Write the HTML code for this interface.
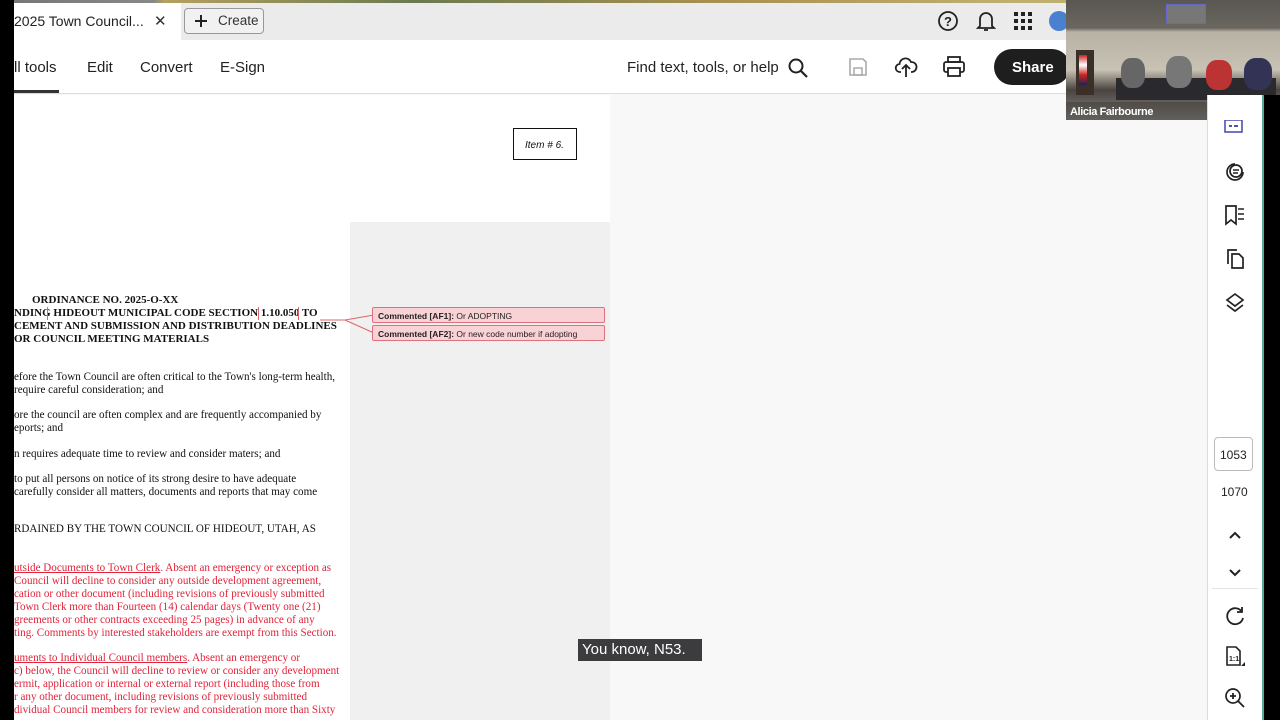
<!DOCTYPE html>
<html><head><meta charset="utf-8"><style>
*{margin:0;padding:0;box-sizing:border-box}
body{width:1280px;height:720px;overflow:hidden;position:relative;background:#f8f8f8;font-family:"Liberation Sans",sans-serif}
.abs{position:absolute}
.ser{font-family:"Liberation Serif",serif}
.doc div{position:absolute;white-space:nowrap;font-size:11.1px;color:#111}
.doc div.b{font-size:11px}
.red{color:#e0243a!important}
svg{position:absolute}
</style></head><body>
<div class="abs" style="left:0;top:0;width:14px;height:720px;background:#000"></div>
<div class="abs" style="left:14px;top:0;width:1052px;height:3px;background:linear-gradient(90deg,#777 0,#888 140px,#b5a060 150px,#6a7a50 400px,#a89050 700px,#c0b070 1000px)"></div>
<div class="abs" style="left:14px;top:3px;width:1052px;height:37px;background:#ebebeb"></div>
<div class="abs" style="left:14px;top:3px;width:167px;height:37px;background:#fff"></div>
<div class="abs" style="left:14px;top:13px;font-size:14px;color:#222">2025 Town Council...</div>
<div class="abs" style="left:154px;top:12px;font-size:15px;color:#333">✕</div>
<div class="abs" style="left:184px;top:8px;width:80px;height:26px;border:1px solid #999;border-radius:4px;background:#f1f1f1"></div>
<svg style="left:194px;top:14px" width="14" height="14"><path d="M7 1v12M1 7h12" stroke="#222" stroke-width="2"/></svg>
<div class="abs" style="left:218px;top:13px;font-size:13.5px;color:#333">Create</div>
<svg style="left:937px;top:10px" width="22" height="22" viewBox="0 0 22 22"><circle cx="11" cy="11" r="9" fill="none" stroke="#222" stroke-width="1.8"/><text x="11" y="16" font-size="13" text-anchor="middle" font-family="Liberation Sans" font-weight="bold" fill="#222">?</text></svg>
<svg style="left:975px;top:9px" width="22" height="24" viewBox="0 0 22 24"><path d="M5 17V10a6 6 0 0 1 12 0v7l2 2H3z" fill="none" stroke="#222" stroke-width="1.8"/><path d="M9 21h4" stroke="#222" stroke-width="1.8"/></svg>
<svg style="left:1014px;top:12px" width="18" height="18" viewBox="0 0 18 18" fill="#222"><rect x="0" y="0" width="4" height="4"/><rect x="7" y="0" width="4" height="4"/><rect x="14" y="0" width="4" height="4"/><rect x="0" y="7" width="4" height="4"/><rect x="7" y="7" width="4" height="4"/><rect x="14" y="7" width="4" height="4"/><rect x="0" y="14" width="4" height="4"/><rect x="7" y="14" width="4" height="4"/><rect x="14" y="14" width="4" height="4"/></svg>
<div class="abs" style="left:1049px;top:11px;width:20px;height:20px;border-radius:50%;background:#4a80d0"></div>
<div class="abs" style="left:14px;top:40px;width:1052px;height:54px;background:#fff;border-bottom:1px solid #ddd"></div>
<div class="abs" style="left:14px;top:59px;font-size:15px;color:#222">ll tools</div>
<div class="abs" style="left:14px;top:90px;width:45px;height:3px;background:#333"></div>
<div class="abs" style="left:87px;top:59px;font-size:15px;color:#222">Edit</div>
<div class="abs" style="left:140px;top:59px;font-size:15px;color:#222">Convert</div>
<div class="abs" style="left:220px;top:59px;font-size:15px;color:#222">E-Sign</div>
<div class="abs" style="left:627px;top:59px;font-size:15px;color:#222">Find text, tools, or help</div>
<svg style="left:787px;top:57px" width="22" height="22" viewBox="0 0 22 22"><circle cx="9" cy="9" r="6.5" fill="none" stroke="#222" stroke-width="2"/><path d="M14 14l6 6" stroke="#222" stroke-width="2.2"/></svg>
<svg style="left:848px;top:57px" width="20" height="20" viewBox="0 0 20 20"><path d="M2 2h13l3 3v13H2z" fill="none" stroke="#aaa" stroke-width="1.6"/><rect x="6" y="11" width="8" height="7" fill="none" stroke="#aaa" stroke-width="1.5"/></svg>
<svg style="left:894px;top:55px" width="24" height="24" viewBox="0 0 24 24"><path d="M7 17H6a4 4 0 0 1-.5-8A6 6 0 0 1 17 7a4.5 4.5 0 0 1 1 10h-1" fill="none" stroke="#222" stroke-width="1.8"/><path d="M12 22V11M8 14l4-4 4 4" fill="none" stroke="#222" stroke-width="1.8"/></svg>
<svg style="left:942px;top:56px" width="24" height="22" viewBox="0 0 24 22"><rect x="6" y="1" width="12" height="5" fill="none" stroke="#222" stroke-width="1.8"/><rect x="2" y="6" width="20" height="10" rx="2" fill="none" stroke="#222" stroke-width="1.8"/><rect x="6" y="12" width="12" height="8" fill="#fff" stroke="#222" stroke-width="1.8"/></svg>
<div class="abs" style="left:994px;top:49px;width:76px;height:36px;border-radius:18px;background:#1e1e1e;color:#fff;font-size:15px;font-weight:bold;line-height:37px;padding-left:18px">Share</div>
<div class="abs" style="left:1066px;top:0;width:214px;height:120px;background:linear-gradient(180deg,#5a5752 0,#6a6660 28px,#b8b2a6 32px,#c8c2b4 70px,#4a4440 90px,#888 120px);overflow:hidden">
 <div class="abs" style="left:100px;top:4px;width:40px;height:20px;border:1px solid #66c;background:#777"></div>
 <div class="abs" style="left:10px;top:50px;width:18px;height:45px;background:#3a3028"></div>
 <div class="abs" style="left:13px;top:55px;width:8px;height:30px;background:linear-gradient(#c22,#fff,#c22,#225)"></div>
 <div class="abs" style="left:50px;top:78px;width:160px;height:22px;background:#2a2a2e"></div>
 <div class="abs" style="left:55px;top:58px;width:24px;height:30px;border-radius:40%;background:#666"></div>
 <div class="abs" style="left:100px;top:56px;width:26px;height:32px;border-radius:40%;background:#777"></div>
 <div class="abs" style="left:140px;top:60px;width:26px;height:30px;border-radius:40%;background:#b33"></div>
 <div class="abs" style="left:178px;top:58px;width:28px;height:32px;border-radius:40%;background:#335"></div>
 <div class="abs" style="left:0;top:102px;width:214px;height:18px;background:rgba(60,55,50,.5)"></div>
 <div class="abs" style="left:4px;top:106px;font-size:11px;color:#fff;font-weight:bold;letter-spacing:-.4px">Alicia Fairbourne</div>
</div>
<div class="abs" style="left:14px;top:95px;width:596px;height:625px;background:#fff"></div>
<div class="abs" style="left:350px;top:222px;width:260px;height:498px;background:#f0f0f0"></div>
<div class="abs" style="left:513px;top:128px;width:64px;height:32px;border:1.5px solid #111;font-size:10px;font-style:italic;padding:11px 0 0 11px;color:#111">Item # 6.</div>
<div class="doc ser">
<div class="b" style="left:32px;top:294px;font-weight:bold">ORDINANCE NO. 2025-O-XX</div>
<div class="b" style="left:14px;top:307px;font-weight:bold">NDING HIDEOUT MUNICIPAL CODE SECTION 1.10.050 TO</div>
<div class="b" style="left:14px;top:320px;font-weight:bold">CEMENT AND SUBMISSION AND DISTRIBUTION DEADLINES</div>
<div class="b" style="left:14px;top:333px;font-weight:bold">OR COUNCIL MEETING MATERIALS</div>
<div style="left:14px;top:371px">efore the Town Council are often critical to the Town's long-term health,</div>
<div style="left:14px;top:384px">require careful consideration; and</div>
<div style="left:14px;top:409px">ore the council are often complex and are frequently accompanied by</div>
<div style="left:14px;top:422px">eports; and</div>
<div style="left:14px;top:448px">n requires adequate time to review and consider maters; and</div>
<div style="left:14px;top:473px">to put all persons on notice of its strong desire to have adequate</div>
<div style="left:14px;top:486px">carefully consider all matters, documents and reports that may come</div>
<div style="left:14px;top:523px">RDAINED BY THE TOWN COUNCIL OF HIDEOUT, UTAH, AS</div>
<div class="red" style="left:14px;top:562px"><u>utside Documents to Town Clerk</u>. Absent an emergency or exception as</div>
<div class="red" style="left:14px;top:575px">Council will decline to consider any outside development agreement,</div>
<div class="red" style="left:14px;top:588px">cation or other document (including revisions of previously submitted</div>
<div class="red" style="left:14px;top:601px">Town Clerk more than Fourteen (14) calendar days (Twenty one (21)</div>
<div class="red" style="left:14px;top:614px">greements or other contracts exceeding 25 pages) in advance of any</div>
<div class="red" style="left:14px;top:627px">ting. Comments by interested stakeholders are exempt from this Section.</div>
<div class="red" style="left:14px;top:652px"><u>uments to Individual Council members</u>. Absent an emergency or</div>
<div class="red" style="left:14px;top:665px">c) below, the Council will decline to review or consider any development</div>
<div class="red" style="left:14px;top:678px">ermit, application or internal or external report (including those from</div>
<div class="red" style="left:14px;top:691px">r any other document, including revisions of previously submitted</div>
<div class="red" style="left:14px;top:704px">dividual Council members for review and consideration more than Sixty</div>
</div>
<div class="abs" style="left:47px;top:307px;width:1px;height:13px;background:#d66"></div>
<div class="abs" style="left:258px;top:307px;width:41px;height:13px;border-left:1px solid #d66;border-right:1px solid #d66"></div>
<svg style="left:290px;top:310px" width="85" height="30"><path d="M30 10H55L84 5M55 10L84 23" fill="none" stroke="#d66" stroke-width="1"/></svg>
<div class="abs" style="left:372px;top:307px;width:233px;height:16px;background:#f9d2d6;border:1px solid #e07080;border-radius:2px;font-size:8.5px;padding:3px 0 0 5px;color:#222"><b>Commented [AF1]:</b> Or ADOPTING</div>
<div class="abs" style="left:372px;top:325px;width:233px;height:16px;background:#f9d2d6;border:1px solid #e07080;border-radius:2px;font-size:8.5px;padding:3px 0 0 5px;color:#222"><b>Commented [AF2]:</b> Or new code number if adopting</div>
<div class="abs" style="left:578px;top:639px;width:124px;height:22px;background:#3c3c3e;color:#fff;font-size:15px;padding:2px 0 0 4px">You know, N53.</div>
<div class="abs" style="left:1207px;top:95px;width:56px;height:625px;background:#fff;border-left:1px solid #ddd"></div>
<div class="abs" style="left:1262px;top:95px;width:2px;height:625px;background:#5a9"></div>
<div class="abs" style="left:1264px;top:95px;width:16px;height:625px;background:#000"></div>
<svg style="left:1224px;top:120px" width="20" height="14"><rect x="1" y="0" width="17" height="12" fill="none" stroke="#5050b0" stroke-width="1.6"/><rect x="5" y="5" width="3" height="2" fill="#5050b0"/><rect x="10" y="5" width="4" height="2" fill="#5050b0"/></svg>
<svg style="left:1224px;top:161px" width="22" height="22" viewBox="0 0 22 22"><path d="M11 3a8 8 0 1 0 8 8" fill="none" stroke="#222" stroke-width="1.7"/><circle cx="12" cy="10" r="6" fill="none" stroke="#222" stroke-width="1.7"/><path d="M9 9h6M9 12h5" stroke="#222" stroke-width="1.4"/></svg>
<svg style="left:1224px;top:204px" width="22" height="22" viewBox="0 0 22 22"><path d="M2 2h10v18l-5-4-5 4z" fill="none" stroke="#222" stroke-width="1.7"/><path d="M14 5h6M14 10h6M14 15h6" stroke="#222" stroke-width="1.6"/></svg>
<svg style="left:1224px;top:248px" width="22" height="22" viewBox="0 0 22 22"><path d="M4 16V2h9" fill="none" stroke="#222" stroke-width="1.7"/><path d="M8 6h7l4 4v10H8z" fill="none" stroke="#222" stroke-width="1.7"/></svg>
<svg style="left:1224px;top:292px" width="22" height="22" viewBox="0 0 22 22"><path d="M11 2l8 6-8 6-8-6z" fill="none" stroke="#222" stroke-width="1.7"/><path d="M3 13l8 6 8-6" fill="none" stroke="#222" stroke-width="1.7"/></svg>
<div class="abs" style="left:1214px;top:437px;width:39px;height:34px;border:1px solid #bbb;border-radius:4px;font-size:12px;color:#222;padding:10px 0 0 5px">1053</div>
<div class="abs" style="left:1221px;top:485px;font-size:12px;color:#222">1070</div>
<svg style="left:1228px;top:530px" width="14" height="10"><path d="M2 8l5-5 5 5" fill="none" stroke="#222" stroke-width="2"/></svg>
<svg style="left:1228px;top:568px" width="14" height="10"><path d="M2 2l5 5 5-5" fill="none" stroke="#222" stroke-width="2"/></svg>
<div class="abs" style="left:1212px;top:588px;width:46px;height:1px;background:#e4e4e4"></div>
<svg style="left:1224px;top:605px" width="22" height="22" viewBox="0 0 22 22"><path d="M18 7A8 8 0 1 0 19 13" fill="none" stroke="#222" stroke-width="1.8"/><path d="M18 2v5h-5" fill="none" stroke="#222" stroke-width="1.8"/></svg>
<svg style="left:1225px;top:646px" width="22" height="22" viewBox="0 0 22 22"><path d="M2 1h9l4 4v14H2z" fill="none" stroke="#222" stroke-width="1.6"/><text x="4" y="15" font-size="7" font-family="Liberation Sans" font-weight="bold" fill="#222">1:1</text><path d="M20 16v4h-4z" fill="#222"/></svg>
<svg style="left:1224px;top:687px" width="22" height="22" viewBox="0 0 22 22"><circle cx="9" cy="9" r="7" fill="none" stroke="#222" stroke-width="1.7"/><path d="M14 14l6 6M6 9h6M9 6v6" stroke="#222" stroke-width="1.8"/></svg>
</body></html>
